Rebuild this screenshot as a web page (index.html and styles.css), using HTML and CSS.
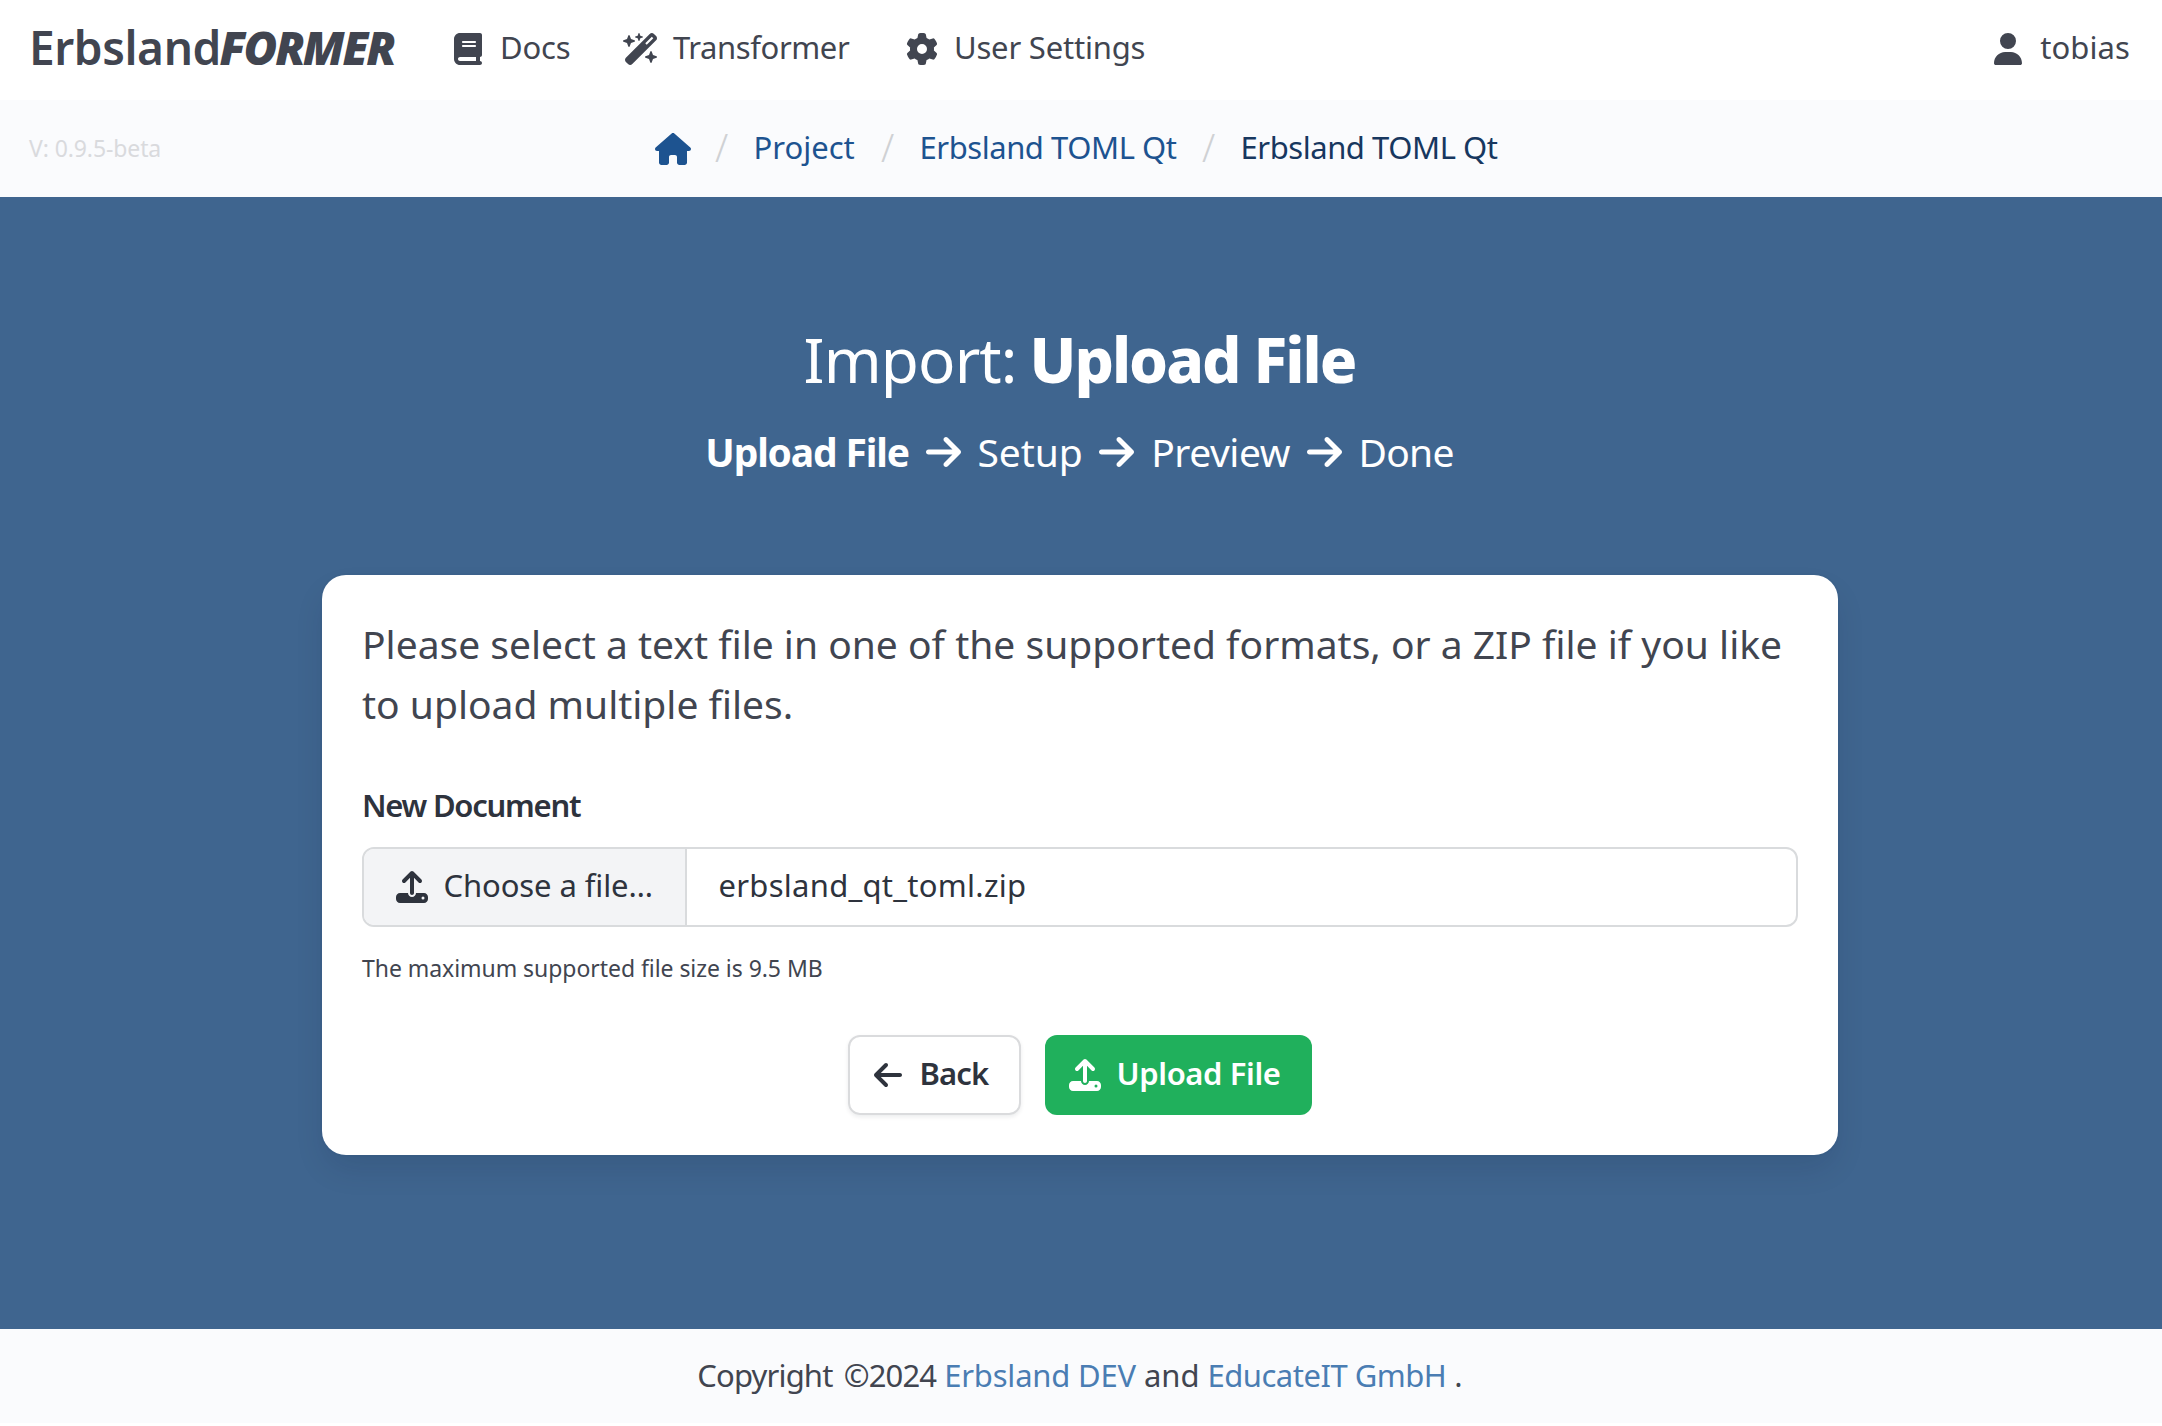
FILE: index.html
```html
<!DOCTYPE html>
<html lang="en">
<head>
<meta charset="utf-8">
<title>ErbslandFORMER – Import: Upload File</title>
<link rel="stylesheet" href="styles.css">
</head>
<body>
<svg class="sprite" aria-hidden="true">
  <symbol id="book" viewBox="0 0 448 512"><path d="M96 0C43 0 0 43 0 96V416c0 53 43 96 96 96H384h32c17.7 0 32-14.3 32-32s-14.3-32-32-32V384c17.7 0 32-14.3 32-32V32c0-17.7-14.3-32-32-32H384 96zm0 384H352v64H96c-17.7 0-32-14.3-32-32s14.3-32 32-32zm32-240c0-8.8 7.2-16 16-16H336c8.8 0 16 7.2 16 16s-7.2 16-16 16H144c-8.8 0-16-7.2-16-16zm16 48H336c8.8 0 16 7.2 16 16s-7.2 16-16 16H144c-8.8 0-16-7.2-16-16s7.2-16 16-16z"/></symbol>
  <symbol id="wand" viewBox="0 0 576 512"><path d="M234.7 42.7L197 56.8c-3 1.1-5 4-5 7.2s2 6.1 5 7.2l37.7 14.1L248.8 123c1.1 3 4 5 7.2 5s6.1-2 7.2-5l14.1-37.7L315 71.2c3-1.1 5-4 5-7.2s-2-6.1-5-7.2L277.3 42.7 263.2 5c-1.1-3-4-5-7.2-5s-6.1 2-7.2 5L234.7 42.7zM46.1 395.4c-18.7 18.7-18.7 49.1 0 67.9l34.6 34.6c18.7 18.7 49.1 18.7 67.9 0L529.9 116.5c18.7-18.7 18.7-49.1 0-67.9L495.3 14.1c-18.7-18.7-49.1-18.7-67.9 0L46.1 395.4zM484.6 82.6l-105 105-23.3-23.3 105-105 23.3 23.3zM7.5 117.2C3 118.9 0 123.2 0 128s3 9.1 7.5 10.8L64 160l21.2 56.5c1.7 4.5 6 7.5 10.8 7.5s9.1-3 10.8-7.5L128 160l56.5-21.2c4.5-1.7 7.5-6 7.5-10.8s-3-9.1-7.5-10.8L128 96 106.8 39.5C105.1 35 100.8 32 96 32s-9.1 3-10.8 7.5L64 96 7.5 117.2zm352 256c-4.5 1.7-7.5 6-7.5 10.8s3 9.1 7.5 10.8L416 416l21.2 56.5c1.7 4.5 6 7.5 10.8 7.5s9.1-3 10.8-7.5L480 416l56.5-21.2c4.5-1.7 7.5-6 7.5-10.8s-3-9.1-7.5-10.8L480 352l-21.2-56.5c-1.7-4.5-6-7.5-10.8-7.5s-9.1 3-10.8 7.5L416 352l-56.5 21.2z"/></symbol>
  <symbol id="gear" viewBox="0 0 512 512"><path d="M495.9 166.6c3.2 8.7 .5 18.4-6.4 24.6l-43.3 39.4c1.1 8.3 1.7 16.8 1.7 25.4s-.6 17.1-1.7 25.4l43.3 39.4c6.9 6.2 9.6 15.9 6.4 24.6c-4.4 11.9-9.7 23.3-15.8 34.3l-4.7 8.1c-6.6 11-14 21.4-22.1 31.2c-5.9 7.2-15.7 9.6-24.5 6.8l-55.7-17.7c-13.4 10.3-28.2 18.9-44 25.4l-12.5 57.1c-2 9.1-9 16.3-18.2 17.8c-13.8 2.3-28 3.5-42.5 3.5s-28.7-1.2-42.5-3.5c-9.2-1.5-16.2-8.7-18.2-17.8l-12.5-57.1c-15.8-6.5-30.6-15.1-44-25.4L83.1 425.9c-8.8 2.8-18.6 .3-24.5-6.8c-8.1-9.8-15.5-20.2-22.1-31.2l-4.7-8.1c-6.1-11-11.4-22.4-15.8-34.3c-3.2-8.7-.5-18.4 6.4-24.6l43.3-39.4C64.6 273.1 64 264.6 64 256s.6-17.1 1.7-25.4L22.4 191.2c-6.9-6.2-9.6-15.9-6.4-24.6c4.4-11.9 9.7-23.3 15.8-34.3l4.7-8.1c6.6-11 14-21.4 22.1-31.2c5.9-7.2 15.7-9.6 24.5-6.8l55.7 17.7c13.4-10.3 28.2-18.9 44-25.4l12.5-57.1c2-9.1 9-16.3 18.2-17.8C227.3 1.2 241.5 0 256 0s28.7 1.2 42.5 3.5c9.2 1.5 16.2 8.7 18.2 17.8l12.5 57.1c15.8 6.5 30.6 15.1 44 25.4l55.7-17.7c8.8-2.8 18.6-.3 24.5 6.8c8.1 9.8 15.5 20.2 22.1 31.2l4.7 8.1c6.1 11 11.4 22.4 15.8 34.3zM256 336a80 80 0 1 0 0-160 80 80 0 1 0 0 160z"/></symbol>
  <symbol id="user" viewBox="0 0 448 512"><path d="M224 256A128 128 0 1 0 224 0a128 128 0 1 0 0 256zm-45.7 48C79.8 304 0 383.8 0 482.3C0 498.7 13.3 512 29.7 512H418.3c16.4 0 29.7-13.3 29.7-29.7C448 383.8 368.2 304 269.7 304H178.3z"/></symbol>
  <symbol id="house" viewBox="0 0 576 512"><path d="M575.8 255.5c0 18-15 32.1-32 32.1h-32l.7 160.2c0 2.7-.2 5.4-.5 8.1V472c0 22.1-17.9 40-40 40H456c-1.1 0-2.2 0-3.3-.1c-1.4 .1-2.8 .1-4.2 .1H416 392c-22.1 0-40-17.9-40-40V448 384c0-17.7-14.3-32-32-32H256c-17.7 0-32 14.3-32 32v64 24c0 22.1-17.9 40-40 40H160 128.1c-1.5 0-3-.1-4.5-.2c-1.2 .1-2.4 .2-3.6 .2H104c-22.1 0-40-17.9-40-40V360c0-.9 0-1.9 .1-2.8V287.6H32c-18 0-32-14-32-32.1c0-9 3-17 10-24L266.4 8c7-7 15-8 22-8s15 2 21 7L564.8 231.5c8 7 12 15 11 24z"/></symbol>
  <symbol id="arrow" viewBox="0 0 448 512"><path d="M438.6 278.6c12.5-12.5 12.5-32.8 0-45.3l-160-160c-12.5-12.5-32.8-12.5-45.3 0s-12.5 32.8 0 45.3L338.8 224 32 224c-17.7 0-32 14.3-32 32s14.3 32 32 32l306.7 0L233.4 393.4c-12.5 12.5-12.5 32.8 0 45.3s32.8 12.5 45.3 0l160-160z"/></symbol>
  <symbol id="upload" viewBox="0 0 512 512"><path d="M288 109.3V352c0 17.7-14.3 32-32 32s-32-14.3-32-32V109.3l-73.4 73.4c-12.5 12.5-32.8 12.5-45.3 0s-12.5-32.8 0-45.3l128-128c12.5-12.5 32.8-12.5 45.3 0l128 128c12.5 12.5 12.5 32.8 0 45.3s-32.8 12.5-45.3 0L288 109.3zM64 352H192c0 35.3 28.7 64 64 64s64-28.7 64-64H448c35.3 0 64 28.7 64 64v32c0 35.3-28.7 64-64 64H64c-35.3 0-64-28.7-64-64V416c0-35.3 28.7-64 64-64zM432 456a24 24 0 1 0 0-48 24 24 0 1 0 0 48z"/></symbol>
</svg>

<nav class="navbar">
  <a class="brand"><span class="brand-name">Erbsland</span><span class="brand-mark">FORMER</span></a>
  <a class="nav-item nav-docs"><span class="nav-icon"><svg class="w28"><use href="#book"/></svg></span><span class="label">Docs</span></a>
  <a class="nav-item nav-transformer"><span class="nav-icon"><svg class="w36"><use href="#wand"/></svg></span><span class="label t-transformer">Transformer</span></a>
  <a class="nav-item"><span class="nav-icon"><svg class="w32"><use href="#gear"/></svg></span><span class="label t-settings">User Settings</span></a>
  <a class="nav-item nav-user"><span class="nav-icon"><svg class="w28"><use href="#user"/></svg></span><span class="label">tobias</span></a>
</nav>

<div class="crumb-bar">
  <div class="version">V: 0.9.5-beta</div>
  <ol class="crumbs">
    <li class="crumb-home"><svg class="w36"><use href="#house"/></svg></li>
    <li class="slash">/</li>
    <li class="crumb-project"><a class="label">Project</a></li>
    <li class="slash">/</li>
    <li class="crumb-name"><a class="label">Erbsland TOML Qt</a></li>
    <li class="slash">/</li>
    <li class="crumb-name current"><a class="label">Erbsland TOML Qt</a></li>
  </ol>
</div>

<main>
  <h1><span class="light">Import:</span><strong>Upload File</strong></h1>
  <div class="steps">
    <strong>Upload File</strong>
    <svg class="step-arrow"><use href="#arrow"/></svg>
    <span class="t-setup">Setup</span>
    <svg class="step-arrow"><use href="#arrow"/></svg>
    <span class="t-preview">Preview</span>
    <svg class="step-arrow"><use href="#arrow"/></svg>
    <span class="t-done">Done</span>
  </div>
  <form class="card">
    <p class="intro">Please select a text file in one of the supported formats, or a ZIP file if you like<br>to upload multiple files.</p>
    <div class="field-label">New Document</div>
    <div class="file">
      <span class="file-cta"><svg class="w32"><use href="#upload"/></svg><span class="label">Choose a file…</span></span>
      <span class="file-name"><span class="label">erbsland_qt_toml.zip</span></span>
    </div>
    <p class="help">The maximum supported file size is 9.5 MB</p>
    <div class="buttons">
      <a class="button back"><svg class="w28 flip"><use href="#arrow"/></svg><span class="label">Back</span></a>
      <a class="button primary"><svg class="w32"><use href="#upload"/></svg><span class="label">Upload File</span></a>
    </div>
  </form>
</main>

<footer>
  <span class="t-copy">Copyright ©2024</span>
  <a>Erbsland DEV</a>
  <span>and</span>
  <a class="t-edu">EducateIT GmbH</a>
  <span>.</span>
</footer>
</body>
</html>
```
FILE: styles.css
```css
* { box-sizing: border-box; }
body {
  margin: 0;
  width: 2162px;
  height: 1426px;
  overflow: hidden;
  display: flex;
  flex-direction: column;
  background: #fff;
  color: #414550;
  font: 31px/48px "Noto Sans", sans-serif;
}
.sprite { display: none; }
svg { height: 32px; flex: none; fill: currentColor; display: block; }
.w28 { width: 28px; }
.w32 { width: 32px; }
.w36 { width: 36px; }
.flip { transform: scaleX(-1); }
.label { padding-bottom: 4px; white-space: nowrap; }

/* Navigation */
.navbar {
  height: 100px;
  padding: 0 32px 2px 29px;
  display: flex;
  align-items: center;
}
.brand {
  width: 415px;
  padding-bottom: 5px;
  font-size: 46px;
  line-height: 60px;
  white-space: nowrap;
}
.brand-name { font-weight: 600; letter-spacing: -.4px; }
.brand-mark { font-weight: 900; font-style: italic; letter-spacing: -2.2px; margin-left: -1.5px; }
.nav-item { display: flex; align-items: center; gap: 8px; }
.nav-icon { width: 48px; display: flex; justify-content: center; }
.nav-docs { width: 173px; letter-spacing: -.2px; }
.nav-transformer { width: 281px; }
.nav-user { margin-left: auto; letter-spacing: .1px; }
.t-transformer { letter-spacing: -.4px; }
.t-settings { letter-spacing: -.2px; }

/* Breadcrumbs */
.crumb-bar {
  height: 97px;
  padding: 0 28px 0 29px;
  display: flex;
  align-items: center;
  background: #fafbfd;
}
.version { width: 626px; font-size: 23px; color: #d9dadd; padding-bottom: 2px; letter-spacing: -.1px; }
.crumbs { display: flex; align-items: center; margin: 0; padding: 0; list-style: none; color: #1d5390; }
.crumbs .label { display: block; padding-left: 1.5px; }
.crumb-project { width: 105px; }
.crumb-name { width: 260px; letter-spacing: -.45px; white-space: nowrap; }
.current { color: #17375f; }
.slash { width: 61px; text-align: center; font-size: 38px; font-weight: 300; color: #cfd1d4; padding-bottom: 3px; }

/* Main */
main {
  height: 1132px;
  padding-top: 126px;
  display: flex;
  flex-direction: column;
  align-items: center;
  background: #3f658f;
}
h1 {
  margin: 0 3px 0 0;
  display: flex;
  gap: 13px;
  color: #fff;
  font-size: 62px;
  line-height: 72px;
}
h1 .light { font-weight: 400; letter-spacing: -.9px; }
h1 strong { font-weight: 800; letter-spacing: -2px; }
.steps {
  margin: 27px 3px 0 0;
  display: flex;
  align-items: center;
  gap: 16.8px;
  color: #fff;
  font-size: 39px;
  line-height: 60px;
}
.steps strong { font-weight: 700; letter-spacing: -1.15px; }
.step-arrow { width: 35px; height: 40px; }
.t-setup { letter-spacing: -.1px; }
.t-preview { letter-spacing: -.45px; }
.t-done { letter-spacing: -.75px; }
.card {
  width: 1516px;
  height: 580px;
  margin: 93px 2px 0 0;
  padding: 39px 40px 40px;
  border-radius: 24px;
  background: #fff;
  box-shadow: 0 16px 32px -4px rgba(10, 20, 40, .12), 0 0 0 2px rgba(10, 20, 40, .02);
}
.intro { margin: 0; font-size: 39px; line-height: 60px; white-space: nowrap; }
.field-label { margin-top: 47px; font-weight: 600; letter-spacing: -1.25px; color: #2e333d; }
.file {
  height: 80px;
  margin-top: 18px;
  display: flex;
  border: 2px solid #d9dbdd;
  border-radius: 12px;
  overflow: hidden;
  color: #2e333d;
}
.file-cta {
  width: 323px;
  padding-left: 32px;
  display: flex;
  align-items: center;
  gap: 15.5px;
  letter-spacing: -.1px;
  background: #f3f4f6;
  border-right: 2px solid #d9dbdd;
}
.file-name { padding-left: 31.5px; display: flex; align-items: center; letter-spacing: .27px; }
.help { margin: 23px 0 0; font-size: 23px; line-height: 36px; letter-spacing: -.05px; }
.buttons { margin-top: 49px; display: flex; justify-content: center; gap: 24px; }
.button {
  height: 80px;
  padding-left: 24px;
  display: flex;
  align-items: center;
  border-radius: 12px;
  font-weight: 600;
}
.back {
  width: 173px;
  gap: 17.5px;
  border: 2px solid #dadbdd;
  color: #2e333d;
  letter-spacing: -.9px;
  box-shadow: 0 2px 4px rgba(10, 20, 40, .08);
}
.primary { width: 267px; gap: 15.5px; background: #20b05c; color: #fff; letter-spacing: -.4px; }

/* Footer */
footer {
  height: 94px;
  padding: 22px 2px 0 0;
  display: flex;
  justify-content: center;
  gap: 8px;
  background: #fafbfd;
}
footer a { color: #4a7db3; letter-spacing: -.2px; }
footer .t-edu { letter-spacing: -.5px; }
.t-copy { letter-spacing: -.85px; word-spacing: 4px; }
```
